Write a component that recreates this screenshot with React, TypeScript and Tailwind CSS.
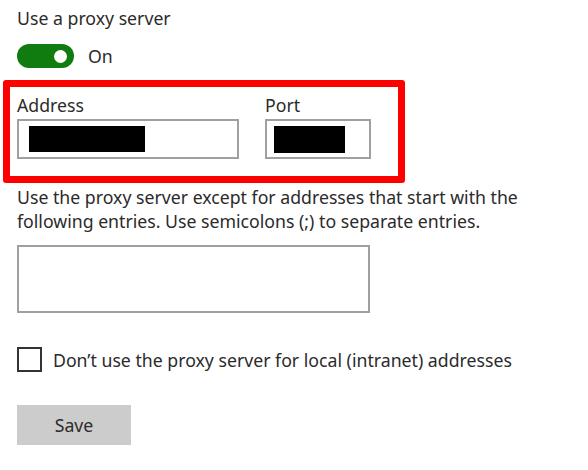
import { useState } from 'react';

export default function App() {
  const [enabled, setEnabled] = useState(true);
  const [bypassLocal, setBypassLocal] = useState(false);

  return (
    <div
      className="min-h-[470px] w-[588px] bg-white pl-[17px] pt-[6px] text-[17.7px] text-[#2b2b2b]"
      style={{ fontFamily: '"Noto Sans", "Open Sans", sans-serif' }}
    >
      <div className="leading-[24px]">Use a proxy server</div>

      {/* toggle */}
      <div className="mt-[14px] flex items-center gap-[14px]">
        <button
          onClick={() => setEnabled(!enabled)}
          className={`flex h-[24px] w-[57px] items-center rounded-full px-[7px] ${
            enabled ? 'justify-end bg-[#107c10]' : 'justify-start border-2 border-[#333] bg-white'
          }`}
        >
          <span className={`h-[13px] w-[13px] rounded-full ${enabled ? 'bg-white' : 'bg-[#333]'}`} />
        </button>
        <span className="leading-[24px]">{enabled ? 'On' : 'Off'}</span>
      </div>

      {/* highlighted address / port block */}
      <div className="-ml-[14px] mt-[12px] w-[402px] rounded-[3px] border-[7px] border-[#ff0000] pb-[17px] pl-[7px] pt-[6px]">
        <div className="flex gap-[26px]">
          <div className="flex flex-col">
            <label className="leading-[24px]">Address</label>
            <div className="mt-[2px] flex h-[40px] w-[222px] items-center border-2 border-[#a0a0a0] pl-[10px]">
              <div className="h-[26px] w-[116px] bg-black" />
            </div>
          </div>
          <div className="flex flex-col">
            <label className="leading-[24px]">Port</label>
            <div className="mt-[2px] flex h-[40px] w-[106px] items-center border-2 border-[#a0a0a0] pl-[7px]">
              <div className="h-[27px] w-[71px] bg-black" />
            </div>
          </div>
        </div>
      </div>

      <p className="mt-[2px] leading-[24px]">
        Use the proxy server except for addresses that start with the
        <br />
        following entries. Use semicolons (;) to separate entries.
      </p>

      <textarea className="mt-[12px] block h-[68px] w-[353px] resize-none border-2 border-[#a0a0a0] outline-none" />

      <label className="mt-[34px] flex cursor-pointer items-center gap-[11px]">
        <span
          onClick={() => setBypassLocal(!bypassLocal)}
          className="flex h-[25px] w-[25px] items-center justify-center border-2 border-[#333]"
        >
          {bypassLocal && <span className="text-[14px] leading-none">✓</span>}
        </span>
        <span className="leading-[24px]">Don’t use the proxy server for local (intranet) addresses</span>
      </label>

      <button className="mt-[33px] h-[40px] w-[114px] bg-[#cccccc] leading-[24px]">Save</button>
    </div>
  );
}
